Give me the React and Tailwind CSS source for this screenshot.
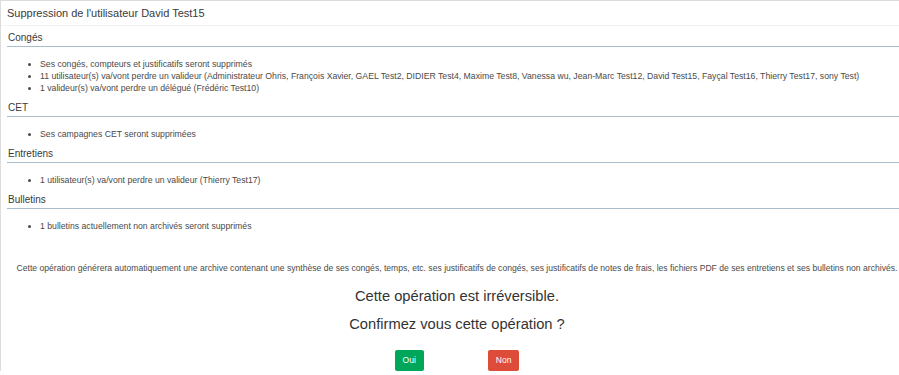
import React from 'react';

const sections = [
    {
        title: 'Congés',
        items: [
            'Ses congés, compteurs et justificatifs seront supprimés',
            '11 utilisateur(s) va/vont perdre un valideur (Administrateur Ohris, François Xavier, GAEL Test2, DIDIER Test4, Maxime Test8, Vanessa wu, Jean-Marc Test12, David Test15, Fayçal Test16, Thierry Test17, sony Test)',
            '1 valideur(s) va/vont perdre un délégué (Frédéric Test10)',
        ],
    },
    { title: 'CET', items: ['Ses campagnes CET seront supprimées'] },
    { title: 'Entretiens', items: ['1 utilisateur(s) va/vont perdre un valideur (Thierry Test17)'] },
    { title: 'Bulletins', items: ['1 bulletins actuellement non archivés seront supprimés'] },
];

export default function App() {
    return (
        <div className="w-[899px] h-[375px] overflow-hidden bg-white text-[#4a4a4a] font-['Liberation_Sans',Arial,sans-serif]">
            <div className="w-[913px] border-t border-l border-[#dcdcdc]">
                {/* Header */}
                <div className="h-[25px] leading-[24px] px-[6px] text-[11px] text-[#3a3a3a] border-b border-[#f2f2f2]">
                    Suppression de l'utilisateur David Test15
                </div>

                {/* Sections */}
                <div className="pt-[5px] pl-[6px]">
                    {sections.map((s) => (
                        <div key={s.title} className="mb-[7px]">
                            <div className="text-[10px] leading-[14px] pb-[1px] pl-px text-[#3a3a3a] border-b border-[#a9bdcc]">
                                {s.title}
                            </div>
                            <ul className="mt-[11px] pl-[33px] list-disc text-[8.7px] leading-[12px]">
                                {s.items.map((item) => (
                                    <li key={item}>{item}</li>
                                ))}
                            </ul>
                        </div>
                    ))}
                </div>

                {/* Confirmation */}
                <div className="text-center">
                    <p className="mt-[30px] text-[8.6px] leading-[12px] whitespace-nowrap">
                        Cette opération générera automatiquement une archive contenant une synthèse de ses congés, temps, etc. ses justificatifs de congés, ses justificatifs de notes de frais, les fichiers PDF de ses entretiens et ses bulletins non archivés.
                    </p>
                    <p className="mt-[12px] text-[14.7px] leading-[20px] text-[#333]">Cette opération est irréversible.</p>
                    <p className="mt-[8px] text-[14.7px] leading-[20px] text-[#333]">Confirmez vous cette opération ?</p>
                    <div className="mt-[16px] flex justify-center gap-[64px]">
                        <button className="h-[21px] px-[8px] rounded-[2px] bg-[#00a65a] text-white text-[8.5px]">Oui</button>
                        <button className="h-[21px] px-[8px] rounded-[2px] bg-[#dd4b39] text-white text-[8.5px]">Non</button>
                    </div>
                </div>
            </div>
        </div>
    );
}
